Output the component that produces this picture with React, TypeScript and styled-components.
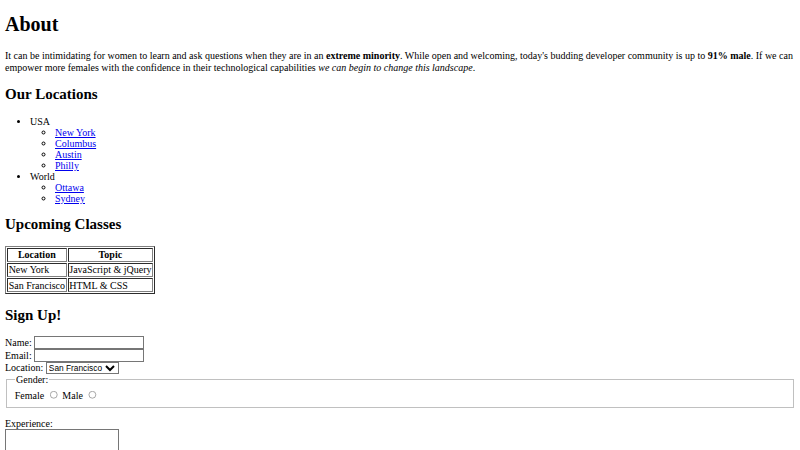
import * as React from 'react'
import styled, { createGlobalStyle } from 'styled-components'

const GlobalStyle = createGlobalStyle`
  html {
    zoom: 0.625;
  }
  body {
    margin: 0;
    padding: 0 8px 8px;
    font-family: "Liberation Serif", "Times New Roman", serif;
    color: #000;
    background: #fff;
  }
`

const Title = styled.h1`
  font-size: 2em;
  margin: 0.67em 0;
`

const Section = styled.h2`
  font-size: 1.5em;
  margin: 0.83em 0;
`

const Text = styled.p`
  margin: 1em 0;
  line-height: 1.2;
`

const List = styled.ul<{ $nested?: boolean }>`
  margin: ${(p) => (p.$nested ? '0' : '1em 0')};
  padding-left: 40px;
  list-style-type: ${(p) => (p.$nested ? 'circle' : 'disc')};
`

const Link = styled.a`
  color: #0000ee;
  text-decoration: underline;
`

const Classes = styled.table`
  border: 1px outset #808080;
  border-spacing: 2px;

  th,
  td {
    border: 1px inset #808080;
    padding: 1px;
  }
`

const Gender = styled.fieldset`
  margin: 0 2px;
  padding: 0.35em 0.75em 0.625em;
  border: 2px groove #c0c0c0;
`

const Field = styled.input`
  width: 176px;
  box-sizing: border-box;
  height: 21px;
`

const Picker = styled.select`
  font-family: "Liberation Sans", Arial, sans-serif;
  font-size: 13.33px;
`

const Block = styled.p`
  margin: 1em 0 0;
`

const Notes = styled.textarea`
  width: 182px;
  box-sizing: border-box;
`

const locations = [
  { region: 'USA', cities: ['New York', 'Columbus', 'Austin', 'Philly'] },
  { region: 'World', cities: ['Ottawa', 'Sydney'] },
]

const classes = [
  ['New York', 'JavaScript & jQuery'],
  ['San Francisco', 'HTML & CSS'],
]

export default function App() {
  return (
    <>
      <GlobalStyle />
      <Title>About</Title>
      <Text>
        It can be intimidating for women to learn and ask questions when they are in an{' '}
        <strong>extreme minority</strong>. While open and welcoming, today's budding developer
        community is up to <strong>91% male</strong>. If we can empower more females with the
        confidence in their technological capabilities <em>we can begin to change this landscape</em>.
      </Text>

      <Section>Our Locations</Section>
      <List>
        {locations.map((l) => (
          <li key={l.region}>
            {l.region}
            <List $nested>
              {l.cities.map((c) => (
                <li key={c}>
                  <Link href="#">{c}</Link>
                </li>
              ))}
            </List>
          </li>
        ))}
      </List>

      <Section>Upcoming Classes</Section>
      <Classes>
        <thead>
          <tr>
            <th>Location</th>
            <th>Topic</th>
          </tr>
        </thead>
        <tbody>
          {classes.map(([loc, topic]) => (
            <tr key={loc}>
              <td>{loc}</td>
              <td>{topic}</td>
            </tr>
          ))}
        </tbody>
      </Classes>

      <Section>Sign Up!</Section>
      <form>
        <label>
          Name: <Field type="text" />
        </label>
        <br />
        <label>
          Email: <Field type="email" />
        </label>
        <br />
        <label>
          Location:{' '}
          <Picker defaultValue="San Francisco">
            <option>New York</option>
            <option>San Francisco</option>
          </Picker>
        </label>
        <Gender>
          <legend>Gender:</legend>
          <label>
            Female <input type="radio" name="gender" />
          </label>{' '}
          <label>
            Male <input type="radio" name="gender" />
          </label>
        </Gender>
        <Block>
          <label>
            Experience:
            <br />
            <Notes rows={3} />
          </label>
        </Block>
      </form>
    </>
  )
}
